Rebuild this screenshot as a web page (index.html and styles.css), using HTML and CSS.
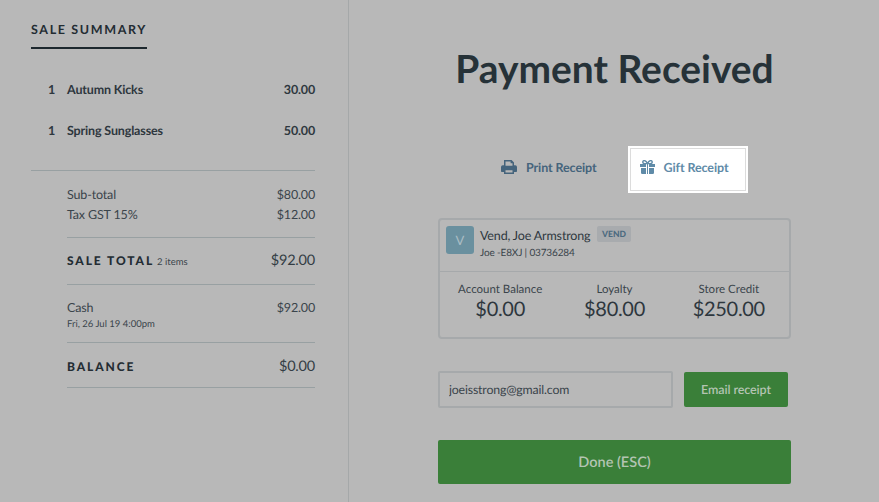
FILE: index.html
```html
<!DOCTYPE html>
<html lang="en">
<head>
    <meta charset="UTF-8">
    <meta name="viewport" content="width=device-width, initial-scale=1.0">
    <title>Payment Received</title>
    <link rel="stylesheet" href="styles.css">
</head>
<body>
    <div class="summary">
        <div class="summary-title">SALE SUMMARY</div>

        <div class="line-item">
            <span class="qty">1</span>
            <span class="item-name">Autumn Kicks</span>
            <span class="item-price">30.00</span>
        </div>
        <div class="line-item">
            <span class="qty">1</span>
            <span class="item-name">Spring Sunglasses</span>
            <span class="item-price">50.00</span>
        </div>

        <div class="totals">
            <div class="totals-group subtotals">
                <div class="row"><span>Sub-total</span><span>$80.00</span></div>
                <div class="row"><span>Tax GST 15%</span><span>$12.00</span></div>
            </div>
            <div class="totals-group sale-total">
                <div class="row">
                    <span><span class="caps">SALE TOTAL</span> <span class="item-count">2 items</span></span>
                    <span class="big-amount">$92.00</span>
                </div>
            </div>
            <div class="totals-group payment">
                <div class="row"><span>Cash</span><span>$92.00</span></div>
                <div class="payment-date">Fri, 26 Jul 19 4:00pm</div>
            </div>
            <div class="totals-group balance">
                <div class="row">
                    <span class="caps">BALANCE</span>
                    <span class="big-amount">$0.00</span>
                </div>
            </div>
        </div>
    </div>

    <div class="main">
        <h1>Payment Received</h1>

        <div class="receipt-actions">
            <div class="receipt-btn">
                <svg class="icon-print" viewBox="0 0 16 14" width="16" height="14">
                    <path fill="#45647c" d="M3 0h7.6L13 2.4V5.2h1.2A1.8 1.8 0 0 1 16 7v4.2a.8.8 0 0 1-.8.8H13v2H3v-2H.8a.8.8 0 0 1-.8-.8V7a1.8 1.8 0 0 1 1.8-1.8H3V0zm1.5 1.4v4.4h7V3.2H9.6V1.4H4.5zm0 8.8v2.4h7v-2.4h-7z"/>
                </svg>
                <span>Print Receipt</span>
            </div>
            <div class="receipt-btn focused">
                <svg class="icon-gift" viewBox="0 0 15 14" width="15" height="14">
                    <path fill="#5f8ba8" d="M0 4h6v3H0V4zm9 0h6v3H9V4zM1 8h5v6H2.2A1.2 1.2 0 0 1 1 12.8V8zm8 0h5v4.8a1.2 1.2 0 0 1-1.2 1.2H9V8zM7 4h1v10H7V4z"/>
                    <path fill="none" stroke="#5f8ba8" stroke-width="1.4" d="M7.5 3.6C6.6 1.6 5.4.6 4.3.6 3.3.6 2.8 1.3 2.8 2c0 1 .9 1.6 2 1.6h5.4c1.1 0 2-.6 2-1.6 0-.7-.5-1.4-1.5-1.4-1.1 0-2.3 1-3.2 3z"/>
                </svg>
                <span>Gift Receipt</span>
            </div>
        </div>

        <div class="customer-card">
            <div class="customer-head">
                <div class="avatar">V</div>
                <div class="customer-info">
                    <div class="customer-name">Vend, Joe Armstrong <span class="tag">VEND</span></div>
                    <div class="customer-code">Joe -E8XJ | 03736284</div>
                </div>
            </div>
            <div class="customer-stats">
                <div class="stat"><div class="stat-label">Account Balance</div><div class="stat-value">$0.00</div></div>
                <div class="stat"><div class="stat-label">Loyalty</div><div class="stat-value">$80.00</div></div>
                <div class="stat"><div class="stat-label">Store Credit</div><div class="stat-value">$250.00</div></div>
            </div>
        </div>

        <div class="email-row">
            <input class="email-input" type="text" value="joeisstrong@gmail.com">
            <button class="email-btn">Email receipt</button>
        </div>

        <button class="done-btn">Done (ESC)</button>
    </div>
</body>
</html>
```

FILE: styles.css
```css
body {
    font-family: 'Lato', sans-serif;
    text-rendering: geometricPrecision;
    background-color: #b8b8b8;
    color: #2b343b;
    display: flex;
    height: 502px;
    margin: 0;
    overflow: hidden;
}

.summary {
    width: 349px;
    box-sizing: border-box;
    border-right: 1px solid #a5a8a9;
    padding: 19px 33px 0 31px;
    flex-shrink: 0;
}

.summary-title {
    display: inline-block;
    font-size: 12.5px;
    line-height: 16px;
    font-weight: 700;
    letter-spacing: 1.65px;
    color: #232c33;
    padding-bottom: 9px;
    width: 116px;
    border-bottom: 2px solid #1d282e;
    margin-bottom: 32px;
    white-space: nowrap;
}

.line-item {
    display: flex;
    font-size: 12.5px;
    letter-spacing: -0.15px;
    font-weight: 700;
    line-height: 18px;
    color: #2e373e;
    margin-bottom: 23px;
}

.qty {
    padding-left: 17px;
    flex-shrink: 0;
    width: 19px;
}

.item-name {
    flex: 1;
}

.totals {
    border-top: 1px solid #98a0a2;
    margin-top: 30px;
    padding-left: 36px;
}

.totals-group {
    border-bottom: 1px solid #98a0a2;
}

.row {
    display: flex;
    justify-content: space-between;
    align-items: baseline;
    font-size: 12.5px;
    letter-spacing: -0.15px;
    color: #3a444b;
}

.subtotals {
    padding: 14px 0 12px;
}

.subtotals .row {
    line-height: 20px;
}

.sale-total {
    padding: 12px 0 11px;
}

.sale-total .row, .balance .row {
    line-height: 21px;
}

.caps {
    font-size: 12px;
    font-weight: 900;
    letter-spacing: 1.9px;
    color: #232c33;
}

.item-count {
    font-size: 9.5px;
    letter-spacing: 0;
    color: #3a444b;
}

.big-amount {
    font-size: 14.5px;
    letter-spacing: -0.2px;
    color: #333d44;
}

.payment {
    padding: 13px 0 10px;
}

.payment .row {
    line-height: 20px;
}

.payment-date {
    font-size: 9.5px;
    line-height: 14px;
    color: #3a444b;
}

.balance {
    padding: 13px 0 10px;
}

.main {
    flex: 1;
    padding: 0 88px 0 89px;
    box-sizing: border-box;
}

h1 {
    font-size: 38.9px;
    font-weight: 700;
    line-height: 48px;
    color: #263238;
    text-align: center;
    margin: 45px 0 0;
}

.receipt-actions {
    display: flex;
    margin: 53px 0 25px;
    padding-left: 53px;
    gap: 21px;
}

.receipt-btn {
    display: flex;
    align-items: center;
    gap: 9px;
    height: 47px;
    padding: 0 10px 5px;
    box-sizing: border-box;
    font-size: 12.5px;
    letter-spacing: -0.1px;
    font-weight: 700;
    color: #45647c;
}

.focused {
    width: 120px;
    background-color: #fff;
    box-shadow: inset 0 0 0 2px #fff, inset 0 0 0 3px #dcdcdc;
    padding: 0 12px 5px;
    color: #5f8ba8;
}

.customer-card {
    border: 2px solid #a6a9ab;
    border-radius: 4px;
    height: 121px;
    box-sizing: border-box;
}

.customer-head {
    display: flex;
    height: 52px;
    box-sizing: border-box;
    padding: 6px 6px 0;
    border-bottom: 1px solid #a6a9ab;
}

.avatar {
    width: 28px;
    height: 28px;
    background-color: #6a909f;
    border-radius: 3px;
    color: #a9bcc4;
    font-size: 13px;
    line-height: 28px;
    text-align: center;
    margin-right: 6px;
}

.customer-name {
    font-size: 12.5px;
    letter-spacing: -0.15px;
    line-height: 18px;
    color: #2e373e;
}

.tag {
    display: inline-block;
    font-size: 8.5px;
    font-weight: 900;
    letter-spacing: 0;
    line-height: 16px;
    height: 16px;
    padding: 0 5.5px;
    margin-left: 3px;
    vertical-align: 3px;
    color: #4c6a80;
    background-color: #a8abae;
    border-radius: 2px;
}

.customer-code {
    font-size: 10px;
    letter-spacing: -0.15px;
    line-height: 13px;
    margin-top: 2px;
    color: #3a444b;
}

.customer-stats {
    display: flex;
    padding: 11px 3px 0;
}

.stat {
    flex: 1;
    text-align: center;
}

.stat-label {
    font-size: 11.5px;
    line-height: 14px;
    color: #3a444b;
}

.stat-value {
    font-size: 20px;
    letter-spacing: -0.3px;
    line-height: 25px;
    color: #2e373e;
}

.email-row {
    display: flex;
    justify-content: space-between;
    align-items: center;
    margin: 32px 3px 0 0;
}

.email-input {
    width: 235px;
    height: 37px;
    box-sizing: border-box;
    border: 2px solid #a6a9ab;
    border-radius: 2px;
    background: transparent;
    font-family: 'Lato', sans-serif;
    text-rendering: geometricPrecision;
    font-size: 12.3px;
    letter-spacing: -0.15px;
    color: #3a444b;
    padding: 0 9px;
}

.email-btn, .done-btn {
    border: none;
    border-radius: 2px;
    background-color: #3a7f39;
    color: #b3c4b2;
    font-family: 'Lato', sans-serif;
    text-rendering: geometricPrecision;
    font-weight: 600;
    cursor: pointer;
}

.email-btn {
    width: 104px;
    height: 35px;
    font-size: 12.5px;
    letter-spacing: -0.1px;
}

.done-btn {
    display: block;
    width: 100%;
    height: 44px;
    margin-top: 32px;
    padding-top: 2px;
    font-size: 14.5px;
}
```
